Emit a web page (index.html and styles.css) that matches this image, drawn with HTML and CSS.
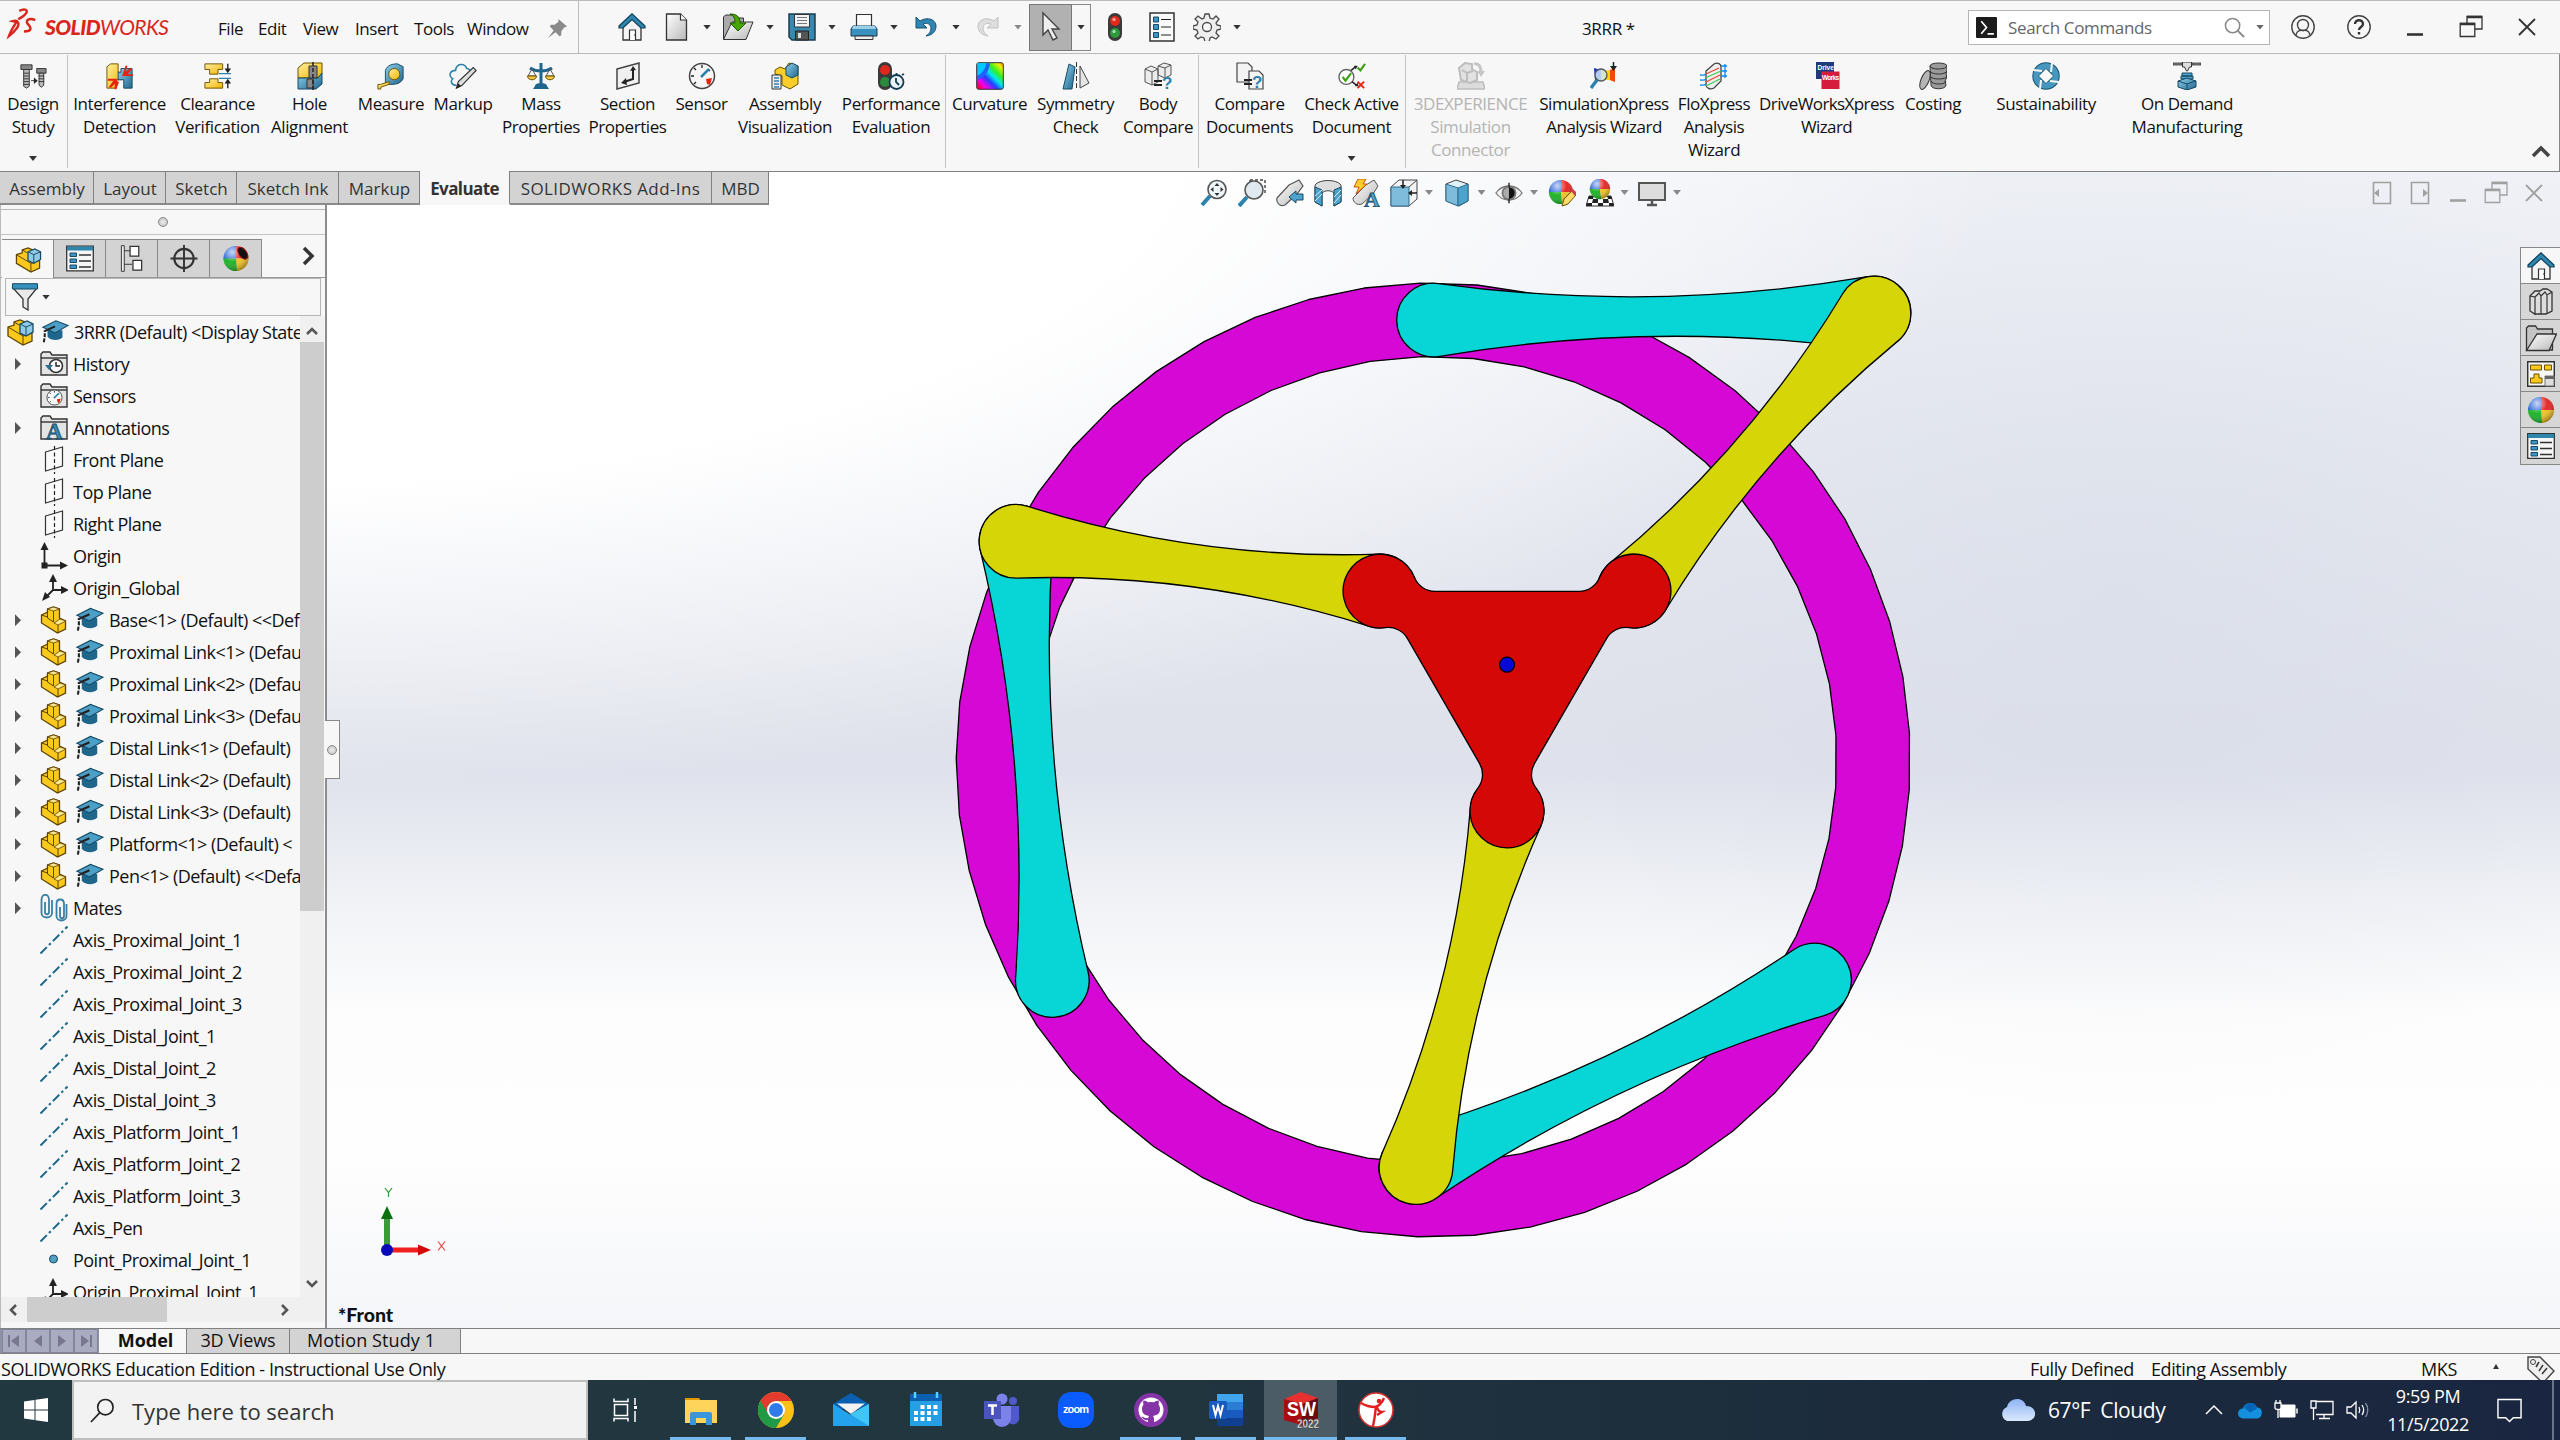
FILE: index.html
```html
<!DOCTYPE html>
<html lang="en">
<head>
<meta charset="utf-8">
<title>3RRR * - SOLIDWORKS</title>
<link rel="stylesheet" href="styles.css">
</head>
<body>
<svg class="defs" width="0" height="0">
  <defs>
    <linearGradient id="gBlue" x1="0" y1="0" x2="1" y2="1"><stop offset="0" stop-color="#8fd0ec"/><stop offset="1" stop-color="#1f668c"/></linearGradient>
    <linearGradient id="gGrey" x1="0" y1="0" x2="1" y2="1"><stop offset="0" stop-color="#fff"/><stop offset="1" stop-color="#b9b9b9"/></linearGradient>
    <linearGradient id="gYel" x1="0" y1="0" x2="1" y2="1"><stop offset="0" stop-color="#fff0a0"/><stop offset="1" stop-color="#f0b400"/></linearGradient>
    <linearGradient id="gRain" x1="1" y1="0" x2="0" y2="1"><stop offset="0" stop-color="#ff5a00"/><stop offset=".12" stop-color="#f0f000"/><stop offset=".3" stop-color="#30f020"/><stop offset=".45" stop-color="#00e8f0"/><stop offset=".6" stop-color="#2040ff"/><stop offset=".78" stop-color="#f000f0"/><stop offset="1" stop-color="#ff0000"/></linearGradient>
    <radialGradient id="gShine" cx=".35" cy=".25" r=".8"><stop offset="0" stop-color="#fff" stop-opacity=".75"/><stop offset=".5" stop-color="#fff" stop-opacity=".05"/><stop offset="1" stop-color="#000" stop-opacity=".4"/></radialGradient>
    <linearGradient id="gCloud" x1="0" y1="0" x2="0" y2="1"><stop offset="0" stop-color="#8db4f4"/><stop offset="1" stop-color="#dbe8fd"/></linearGradient>
  </defs>
  <symbol id="i-house" viewBox="0 0 28 28"><path d="M5 12v15h18V12L14 4z" fill="#f4f4f4" stroke="#333" stroke-width="1.3"/><path d="M11.500 27V17h6v10" fill="#fff" stroke="#333" stroke-width="1.200"/><path d="M16 22h1" stroke="#333"/><path d="M1 13L14 .8 27 13v2h-4l-9-8.500L5 15H1z" fill="#2f86ad" stroke="#0f3f5c" stroke-width="1.200"/></symbol>
  <symbol id="i-new" viewBox="0 0 28 28"><path d="M3.500 1h14l6 6v20h-20z" fill="url(#gGrey)" stroke="#333" stroke-width="1.300"/><path d="M17.500 1v6h6" fill="#fff" stroke="#333" stroke-width="1.200"/></symbol>
  <symbol id="i-openarrow" viewBox="0 0 32 28"><path d="M1.500 26V4l2-2h7l2 3h9v21z" fill="#aaa" stroke="#333"/><path d="M1.500 26.500L10 9h21l-7 17.500z" fill="url(#gGrey)" stroke="#333"/><path d="M8 1c6 0 10 2 10 9h6l-8 8-8-8h5c0-5-1-7-5-9z" fill="#48a500" stroke="#1e5c00"/></symbol>
  <symbol id="i-folder" viewBox="0 0 32 28"><path d="M1.500 26V4l2-2h7l2 3h15v21z" fill="#c4c4c4" stroke="#333" stroke-width="1.300"/><path d="M1.500 26.500L12 10h19.500L24 26.500z" fill="url(#gGrey)" stroke="#333" stroke-width="1.300"/></symbol>
  <symbol id="i-save" viewBox="0 0 28 28"><path d="M1 1h26v26H4l-3-3z" fill="#3788b0" stroke="#1b3c50" stroke-width="1.500"/><path d="M6.500 1.500h15V14h-15z" fill="#f2f2f2" stroke="#333"/><path d="M9 4.500h10M9 7.500h10M9 10.500h10" stroke="#777"/><path d="M7.500 18h13v9h-13z" fill="#555" stroke="#222"/><path d="M10 20h3v5h-3z" fill="#ddd"/></symbol>
  <symbol id="i-print" viewBox="0 0 28 28"><path d="M6.500 14V1.500h15V14" fill="#fafafa" stroke="#333" stroke-width="1.200"/><path d="M3 13h22l2 3v7H1v-7z" fill="#3a91bd" stroke="#143d54"/><path d="M3 13h22l1 3H2z" fill="#9bd0e8"/><path d="M5 23h18v3.500H5z" fill="#eee" stroke="#333"/></symbol>
  <symbol id="i-undo" viewBox="0 0 24 24"><path d="M2 2v11h11L9 9c5-2 8 1 8 4 0 4-2 6-5 8 7-1 10-5 10-10 0-6-8-10-16-5z" fill="#2f86b5" stroke="#17506f"/></symbol>
  <symbol id="i-redo" viewBox="0 0 24 24"><path d="M22 2v11H11l4-4c-5-2-8 1-8 4 0 4 2 6 5 8C5 20 2 16 2 11 2 5 10 1 18 6z" fill="#dedede" stroke="#c2c2c2"/></symbol>
  <symbol id="i-cursor" viewBox="0 0 24 32"><path d="M4 2v22l5-5 5 10 4-2-5-9h7z" fill="#eee" stroke="#444" stroke-width="1.400"/></symbol>
  <symbol id="i-traffic" viewBox="0 0 16 30"><rect x="1" y="1" width="14" height="28" rx="7" fill="#3a3a3a"/><circle cx="8" cy="9" r="5" fill="#e0281c"/><circle cx="8" cy="21" r="5" fill="#2d9a3c"/><circle cx="7" cy="7.500" r="1.700" fill="#ff9b90"/><circle cx="7" cy="19.500" r="1.700" fill="#9bdca2"/></symbol>
  <symbol id="i-list" viewBox="0 0 26 30"><path d="M1 1h24v28H1z" fill="#fafafa" stroke="#333" stroke-width="1.500"/><path d="M4.500 5h5v5h-5zM4.500 12.500h5v5h-5zM4.500 20.500h5v5h-5z" fill="#3c95c4" stroke="#174a66"/><path d="M12 7.500h10M12 15h10M12 23h10" stroke="#222" stroke-width="1.200"/></symbol>
  <symbol id="i-gear" viewBox="0 0 28 28"><path d="M12 1h4l1 4 3 1 3-3 3 3-3 4 1 2 4 1v3l-4 1-1 3 3 3-3 3-4-2-2 1-1 4h-4l-1-4-3-1-3 2-3-3 3-3-1-3-4-1v-3l4-1 1-3-3-3 3-3 4 3 2-1z" fill="#eee" stroke="#4a4a4a" stroke-width="1.300"/><circle cx="14" cy="14" r="4.500" fill="#f7f7f7" stroke="#4a4a4a" stroke-width="1.300"/></symbol>
  <symbol id="i-pin" viewBox="0 0 22 22"><path d="M12 1l9 8-3 1-3 4 0 4-2 1-4-4-8 6 6-8-4-4 1-2h4l4-3z" fill="#8a8a8a"/></symbol>
  <symbol id="i-bolts" viewBox="0 0 30 28"><path d="M2 2h12v5H2z" fill="#888" stroke="#333"/><path d="M5 7h6v18l-3 2-3-2z" fill="#bbb" stroke="#333"/><path d="M5 11h6M5 14h6M5 17h6M5 20h6M5 23h6" stroke="#333"/><path d="M19 6h10v5H19z" fill="#888" stroke="#333"/><path d="M21.500 11h5v13l-2.500 2-2.500-2z" fill="#bbb" stroke="#333"/><path d="M21 14h6M21 17h6M21 20h6M13 19h6" stroke="#333"/><path d="M16 15.500l4 3.500-4 3.500z" fill="#222"/></symbol>
  <symbol id="i-interf" viewBox="0 0 30 28"><path d="M1 4l4-3h8v9h4v8h-6v9H1z" fill="url(#gYel)" stroke="#6b5200"/><path d="M16 6h12v21h-9v-9h-6v-8h3z" fill="url(#gBlue)" stroke="#174a66"/><path d="M22 3l-3 9 8-6-6 7h8M2 18h8l-6 8 7-6-1 8 3-8" fill="none" stroke="#e8220c" stroke-width="2"/></symbol>
  <symbol id="i-clear" viewBox="0 0 30 28"><path d="M1 1h19v6h-5v5H6V7H1z" fill="url(#gYel)" stroke="#6b5200"/><path d="M6 17h9v4h5v6H1v-6h5z" fill="url(#gYel)" stroke="#6b5200"/><path d="M16 11.500h13M16 16.500h13" stroke="#2b83ad" stroke-width="1.500"/><path d="M25.500 1v8M25.500 27v-8" stroke="#222" stroke-width="1.500"/><path d="M22 6h7l-3.500 5zM22 22h7l-3.500-5z" fill="#222"/></symbol>
  <symbol id="i-hole" viewBox="0 0 28 28"><path d="M2 6l6-5h18v10l-4 5H2z" fill="url(#gYel)" stroke="#6b5200"/><path d="M2 16h20l4-5v11l-6 5H2z" fill="url(#gBlue)" stroke="#174a66"/><path d="M13 4h8v12h-8zM11 17h6v9h-6z" fill="#888" stroke="#333"/><path d="M17 0v28" stroke="#222" stroke-width="1.500" stroke-dasharray="4 2"/></symbol>
  <symbol id="i-tape" viewBox="0 0 30 28"><path d="M9 8c2-6 8-7 13-7l6 3v13c-2 4-6 6-12 6H9z" fill="url(#gBlue)" stroke="#174a66"/><circle cx="18.500" cy="12" r="6" fill="url(#gYel)" stroke="#6b5200"/><path d="M1 23h3l9-3v3L4 26v2H1z" fill="url(#gYel)" stroke="#6b5200"/></symbol>
  <symbol id="i-markup" viewBox="0 0 30 28"><path d="M8 24c-5 0-7-4-4-7-5-3-3-9 3-9 1-8 10-8 12-2 2 0 3 1 4 3" fill="none" stroke="#2b83ad" stroke-width="1.700"/><path d="M8 27l2-7L26 5l3 3-15 16z" fill="#ddd" stroke="#333" stroke-width="1.300"/><path d="M8 27l2-5 3 3z" fill="#222"/></symbol>
  <symbol id="i-mass" viewBox="0 0 28 28"><path d="M14 1v20M3 6c6 4 16 4 22 0" fill="none" stroke="#1f668c" stroke-width="3"/><path d="M8 24c0-4 12-4 12 0l2 3H6z" fill="#1f668c"/><path d="M5 7l-4 7h8zM23 7l-4 7h8z" fill="none" stroke="#555"/><path d="M.5 14h9c0 5-9 5-9 0zM18.500 14h9c0 5-9 5-9 0z" fill="#f2c744" stroke="#6b5200"/></symbol>
  <symbol id="i-section" viewBox="0 0 28 28"><path d="M3 7l22-6v20L3 27z" fill="#f0f0f0" stroke="#444" stroke-width="1.500"/><path d="M19 8v9l-9 3" fill="none" stroke="#222" stroke-width="2"/><path d="M16 9l3-5 3 4zM12 16l-5 5 6 2z" fill="#222"/></symbol>
  <symbol id="i-gauge" viewBox="0 0 28 28"><circle cx="14" cy="14" r="12.500" fill="#f6f6f6" stroke="#444" stroke-width="1.500"/><path d="M14 3v3M6 6l2 2M3 14h3M6 22l2-2M22 8l-1 1" stroke="#222" stroke-width="1.300"/><path d="M13 15l8-8" stroke="#2b83ad" stroke-width="2.500"/><path d="M18 17l6-1-2 7-3-1z" fill="#e8220c"/></symbol>
  <symbol id="i-asmvis" viewBox="0 0 28 28"><path d="M4 8l5-3 5 2 4-6 9 3v18l-8 5-8-4V14l-7-2z" fill="#fbcf2a" stroke="#6b5200"/><path d="M15 5l6-4 6 3v9l-6 3-6-3z" fill="url(#gBlue)" stroke="#174a66"/><path d="M1 13h9v14H1z" fill="#eee" stroke="#333"/><path d="M3 16h5M3 19h5M3 22h5M3 25h5" stroke="#2b83ad" stroke-width="1.500"/></symbol>
  <symbol id="i-perf" viewBox="0 0 28 28"><rect x="1" y="0" width="14" height="28" rx="7" fill="#3a3a3a"/><circle cx="8" cy="8" r="5" fill="#e0281c"/><circle cx="8" cy="20" r="5" fill="#2d8a3c"/><circle cx="19.500" cy="20" r="7" fill="#e9f3f8" stroke="#143d54" stroke-width="1.800"/><path d="M19.500 11v3M19 16v4l3 3M25 13l2-1" stroke="#143d54" stroke-width="1.800" fill="none"/></symbol>
  <symbol id="i-curv" viewBox="0 0 28 28"><rect x=".7" y=".7" width="26.600" height="26.600" rx="2" fill="url(#gRain)" stroke="#333"/><path d="M1.300 1.300h9C9 8 6 12 1.300 14z" fill="#00c8ff"/><path d="M1.300 14C6 12 9 8 10.300 1.300H14C13 10 8 16 1.300 18z" fill="#2060ff"/></symbol>
  <symbol id="i-sym" viewBox="0 0 28 28"><path d="M7 2l-6 25h9l3-22z" fill="url(#gBlue)" stroke="#174a66"/><path d="M18 4v22l9-5z" fill="#e5e5e5" stroke="#444"/><path d="M14.500 0v28" stroke="#333" stroke-dasharray="5 2"/></symbol>
  <symbol id="i-body" viewBox="0 0 28 28"><path d="M1 7l6-3 7 3v13l-6 3-7-3zM14 4l6-3 7 2v10l-6 3-7-3z" fill="#ececec" stroke="#555"/><path d="M1 7l7 3 6-3M8 10v13M14 4l7 2 6-3M21 6v9" fill="none" stroke="#555"/><path d="M10 19h8M10 23h8" stroke="#222" stroke-width="2"/><text class="qm" x="18" y="27">?</text></symbol>
  <symbol id="i-docs" viewBox="0 0 28 28"><path d="M1 1h11l4 4v15H1z" fill="#f3f3f3" stroke="#444" stroke-width="1.200"/><path d="M13 9h10l4 4v14H13z" fill="#f3f3f3" stroke="#444" stroke-width="1.200"/><path d="M8 18h8M8 22h8" stroke="#222" stroke-width="2"/><text class="qm" x="16" y="26">?</text></symbol>
  <symbol id="i-check" viewBox="0 0 30 28"><circle cx="9" cy="15" r="8" fill="#fff" stroke="#666" stroke-width="1.500"/><path d="M5 15l3 4 6-8M21 5l3 3 5-7" fill="none" stroke="#3a9d0c" stroke-width="2.200"/><path d="M14 8l5-4M15 20l5 4" stroke="#222" stroke-width="1.500"/><path d="M17 3l4 0-2 4zM18 25l4 0-1-4z" fill="#222"/><path d="M21 20l7 7M28 20l-7 7" stroke="#e8220c" stroke-width="2"/></symbol>
  <symbol id="i-3dx" viewBox="0 0 28 28"><path d="M2 20h24l2 7H0z" fill="#dcdcdc" stroke="#bdbdbd" stroke-width="1.500"/><path d="M2 6l6-5 7 1v5l5 3v8l-7 3-9-3z" fill="#e2e2e2" stroke="#bdbdbd" stroke-width="2"/><path d="M5 8l5 3 6-2M10 11v8" fill="none" stroke="#bdbdbd" stroke-width="2"/><path d="M17 2c5-1 7 3 7 8" fill="none" stroke="#c6c6c6" stroke-width="3"/><path d="M20 9h8l-4 6z" fill="#c6c6c6"/></symbol>
  <symbol id="i-simx" viewBox="0 0 28 28"><path d="M4 6c5 4 12 4 21 0v14c-6-3-12-3-19 0z" fill="#ffd800"/><path d="M4 6l7 2v10l-6 1z" fill="#1535e0"/><path d="M20 8l5-2v14l-5-2z" fill="#f04810"/><circle cx="11" cy="13" r="6" fill="#cfe6f3" fill-opacity=".85" stroke="#555" stroke-width="1.300"/><path d="M7 18l-6 8" stroke="#2b83ad" stroke-width="3.500"/><path d="M23.500 0v6" stroke="#222" stroke-width="1.500"/><path d="M20 4h7l-3.500 5z" fill="#222"/></symbol>
  <symbol id="i-flox" viewBox="0 0 28 28"><path d="M6 9l8-7c4-2 7 0 7 3v14l-7 7c-4 2-8 0-8-3z" fill="#eee" stroke="#444" stroke-width="1.300"/><path d="M6 12l13-6M6 20l14-7" stroke="#f04830" stroke-width="1.300"/><path d="M5 16l16-7M6 24l14-7" stroke="#43c95a" stroke-width="1.300"/><path d="M0 13c3 0 4 1 6-1M0 18c3 0 4 1 6-1M0 23c3 0 4 1 6-1M21 4h6M21 9h6M21 14h6M25 2v14" stroke="#0a8af0" stroke-width="1.300" fill="none"/></symbol>
  <symbol id="i-drive" viewBox="0 0 28 28"><path d="M3 0h18v17H3z" fill="#1f3a7a"/><path d="M8.500 9.500h18V27h-18z" fill="#d41c3c"/><text class="dw" x="4.500" y="7.500">Drive</text><text class="dw" x="9" y="17.500" textLength="17">Works</text></symbol>
  <symbol id="i-coins" viewBox="0 0 28 28"><path d="M11 4c0-4 17-4 17 0v5l-1 3 1 3-2 4 1 4c0 5-15 5-15 0z" fill="#9a9a9a" stroke="#333"/><path d="M11 4c0 4 17 4 17 0M11 9c1 4 16 4 17 0M11 14c1 4 17 4 17 0M12 19c1 4 15 4 15 0" fill="none" stroke="#333"/><ellipse cx="6" cy="18" rx="4" ry="10" transform="rotate(22 6 18)" fill="#b5b5b5" stroke="#333"/></symbol>
  <symbol id="i-sust" viewBox="0 0 28 28"><circle cx="14" cy="14" r="9.500" fill="none" stroke="#15506f" stroke-width="8.500"/><circle cx="14" cy="14" r="9.500" fill="none" stroke="#4597bf" stroke-width="6.500"/><path d="M1 8l9 1M20 1l-1 9M27 20l-9-1M8 27l1-9" stroke="#f7f7f7" stroke-width="2"/><path d="M14 6.500l7.500 7.500-7.500 7.500L6.500 14z" fill="#f7f7f7" stroke="#15506f" stroke-width=".8"/></symbol>
  <symbol id="i-ondem" viewBox="0 0 28 28"><path d="M0 1h9v2H0zM19 1h9v2h-9z" fill="#888" stroke="#333" stroke-width=".8"/><path d="M9.500 0h9v5h-2l-2 4h-1l-2-4h-2z" fill="#ddd" stroke="#333"/><path d="M9 11h10v3H9zM8 14h12v3H8z" fill="#4da3cc" stroke="#174a66"/><path d="M5 19l9-3 9 3v6l-9 3-9-3z" fill="url(#gBlue)" stroke="#174a66"/><path d="M5 19l9 3 9-3M14 22v6" fill="none" stroke="#174a66"/></symbol>
  <symbol id="i-zoomfit" viewBox="0 0 28 28"><path d="M10 17l-8 9" stroke="#2b83ad" stroke-width="4"/><circle cx="17" cy="10.500" r="9" fill="#eef6fa" stroke="#555" stroke-width="1.600"/><path d="M17 4l-2.500 3h5zM17 17l-2.500-3h5zM10.500 10.500l3-2.500v5zM23.500 10.500l-3-2.500v5z" fill="#333"/></symbol>
  <symbol id="i-zoomarea" viewBox="0 0 28 28"><path d="M12 1h15v15M12 1v4" fill="none" stroke="#444" stroke-width="1.400" stroke-dasharray="3 2"/><path d="M9 18l-8 9" stroke="#2b83ad" stroke-width="4"/><circle cx="16" cy="11" r="9" fill="#dfe9ef" stroke="#555" stroke-width="1.600"/></symbol>
  <symbol id="i-prev" viewBox="0 0 28 28"><path d="M1 19L13 6l6-3 4-2 4 6-6 8-12 11c-5 2-9-2-8-7z" fill="url(#gGrey)" stroke="#555" stroke-width="1.200"/><path d="M13 18l7-6v3h7v6h-7v3z" fill="#4da3cc" stroke="#174a66"/></symbol>
  <symbol id="i-secview" viewBox="0 0 28 28"><path d="M1 6c4-6 22-6 26 0v17l-7 4V14c-3-3-9-3-12 0v13l-7-4z" fill="#ddd" stroke="#444"/><path d="M1 8l7 3v16l-7-4zM27 8l-7 3v16l7-4z" fill="#4da3cc" stroke="#174a66"/><path d="M1 17l7-6M1 22l7-7M20 18l7-7M20 24l7-8" stroke="#d8eef8"/></symbol>
  <symbol id="i-annot" viewBox="0 0 28 28"><path d="M1 19L14 6l8-5 4 6-5 8-11 10c-5 2-9-2-9-6z" fill="url(#gGrey)" stroke="#555"/><path d="M6 0h8l-3 5h4L4 15l3-7H2z" fill="#fbcf2a" stroke="#c8500a"/><text class="bigA" x="12" y="28">A</text></symbol>
  <symbol id="i-orient" viewBox="0 0 28 28"><path d="M1 8L9 1h18v19l-8 7H1z" fill="#f4f4f4" stroke="#444"/><path d="M1 8h18v19H1z" fill="#7fbcdb" stroke="#2b6e91"/><path d="M19 8l8-7" stroke="#444"/><path d="M13 1v7M27 14h-7" stroke="#222" stroke-width="1.500"/><path d="M10 6h6l-3 4zM22 11v6l-4-3z" fill="#222"/></symbol>
  <symbol id="i-cube" viewBox="0 0 28 28"><path d="M3 5l10-4 12 4v17l-9 5-13-5z" fill="#e2f0f8" stroke="#444"/><path d="M3 5l12 4v18L3 22z" fill="#7fbcdb" stroke="#2b6e91"/><path d="M15 9l10-4v17l-10 5z" fill="#4da3cc" stroke="#2b6e91"/></symbol>
  <symbol id="i-eye" viewBox="0 0 30 28"><path d="M1 14C8 4 22 4 29 14 22 24 8 24 1 14z" fill="#f2f2f2" stroke="#777" stroke-width="1.400"/><circle cx="15" cy="14" r="8" fill="#777"/><path d="M15 3v22" stroke="#222" stroke-width="1.500"/><path d="M15 8a6 6 0 0 1 0 12z" fill="#111"/><path d="M15 8a6 6 0 0 0 0 12z" fill="#aaa"/></symbol>
  <symbol id="i-ball" viewBox="0 0 28 28"><path d="M14 14V1A13 13 0 0 0 1 15z" fill="#2a64d8"/><path d="M14 14V1a13 13 0 0 1 13 13z" fill="#e02020"/><path d="M14 14h13a13 13 0 0 1-12 13z" fill="#f0c020"/><path d="M14 14H1a13 13 0 0 0 14 13z" fill="#16b020"/><circle cx="14" cy="14" r="13" fill="url(#gShine)"/></symbol>
  <symbol id="i-ballhole" viewBox="0 0 28 28"><use href="#i-ball"/><ellipse cx="21" cy="8.500" rx="4" ry="7" transform="rotate(-35 21 8.500)" fill="#111" stroke="#a01010"/></symbol>
  <symbol id="i-ballpen" viewBox="0 0 28 28"><use href="#i-ball" width="26" height="26"/><path d="M14 27l2-7 8-8 4 4-8 9z" fill="#fbdc6a" stroke="#6b5200"/><path d="M23 12l2-2 4 4-2 3z" fill="#d04040"/></symbol>
  <symbol id="i-scene" viewBox="0 0 28 28"><path d="M3 17h22l3 10H0z" fill="#fff" stroke="#333"/><path d="M3 17h5l-1 3H2zM12 17h5v3h-5zM21 17h4l1 3h-4zM7 20h5v4H6zM17 20h5l1 4h-6zM0 27l1-3h5v3zM12 24h5v3h-5zM23 24h4l1 3h-5z" fill="#222"/><use href="#i-ball" x="3" y="-1" width="22" height="22"/></symbol>
  <symbol id="i-monitor" viewBox="0 0 28 28"><path d="M1 4h26v17H1z" fill="#ddd" stroke="#555" stroke-width="2"/><path d="M14 21v4M9 26h10" stroke="#555" stroke-width="2.500"/></symbol>
  <symbol id="i-asm" viewBox="0 0 28 28"><path d="M2 9l6-2V4l6-2 5 2v8l7 3v8l-9 4L2 18z" fill="#fbc91e" stroke="#5c4300" stroke-width="1.300"/><path d="M2 9l15 9v9M8 4l5 3M17 18l9-3" fill="none" stroke="#5c4300"/><path d="M14 6l7-3 6 3v8l-7 4-6-3z" fill="#8fcbe6" stroke="#174a66" stroke-width="1.300"/><path d="M14 6l6 3 7-3M20 9v9" fill="none" stroke="#174a66"/></symbol>
  <symbol id="i-part" viewBox="0 0 28 28"><path d="M1.500 9l6-3V3l6-2 6 2v9l6 3v8l-8 4L1.500 17z" fill="#fbc91e" stroke="#5c4300" stroke-width="1.300"/><path d="M7.500 3l6 2 6-2-6-2zM14 17l6-4 6 2-8 4z" fill="#fbe98a" stroke="#5c4300" stroke-width=".8"/><path d="M1.500 9l6 2M7.500 6v6l6 4V5M18 19v8" fill="none" stroke="#5c4300"/></symbol>
  <symbol id="i-cap" viewBox="0 0 30 28"><path d="M7 12v7c3 4 12 5 16 1v-8z" fill="#1f668c"/><path d="M2 9l14-7 13 5-14 8z" fill="#4c9fc6" stroke="#174a66" stroke-width="1.200"/><path d="M15 8L4 13v6l-1 6" fill="none" stroke="#222" stroke-width="2.200" stroke-dasharray="13 1.500 4 1.500"/></symbol>
  <symbol id="i-fold" viewBox="0 0 28 28"><path d="M1 25V4l2-2h7l2 3h15v20z" fill="#e4e4e4" stroke="#333" stroke-width="1.400"/><path d="M1 8h26" stroke="#333" stroke-width="1.400"/></symbol>
  <symbol id="i-hist" viewBox="0 0 28 28"><use href="#i-fold"/><circle cx="16" cy="16" r="6.500" fill="#fff" stroke="#333" stroke-width="1.600"/><path d="M16 12v4h4" fill="none" stroke="#222" stroke-width="1.400"/><path d="M5 15h8l-4 5z" fill="#2b6e91"/></symbol>
  <symbol id="i-sens" viewBox="0 0 28 28"><use href="#i-fold"/><use href="#i-gauge" x="6" y="7" width="17" height="17"/></symbol>
  <symbol id="i-anno" viewBox="0 0 28 28"><use href="#i-fold"/><text class="anA" x="6" y="25">A</text></symbol>
  <symbol id="i-plane" viewBox="0 0 28 28"><path d="M5.500 6L22.500 1v19l-17 5z" fill="#fafafa" stroke="#333" stroke-width="1.200"/><path d="M14.500 0v28" stroke="#222" stroke-width="1.200" stroke-dasharray="4 2.500"/></symbol>
  <symbol id="i-origin" viewBox="0 0 28 28"><path d="M4.500 24V5M4.500 23.500H22" stroke="#222" stroke-width="1.800"/><path d="M4.500 0l4 8h-8zM28 23.500l-8 4v-8zM1.500 20.500h6v6h-6z" fill="#222"/></symbol>
  <symbol id="i-csys" viewBox="0 0 28 28"><path d="M13 16V5M13 16h9M13 16l-7 7" stroke="#222" stroke-width="1.800"/><path d="M13 0l4 8H9zM29 16l-8 4v-8zM2 27l3-9 5 5z" fill="#222"/></symbol>
  <symbol id="i-mates" viewBox="0 0 28 28"><path d="M5 8v10c0 3 4 3 4 0V6c0-7-7.500-7-7.500 0v13c0 6 10.500 6 10.500 0V6M20 13v9c0 3 4 3 4 0V10c0-6-7.500-6-7.500 0v12c0 6 10 6 10 0V10" fill="none" stroke="#3a7fa3" stroke-width="1.800"/></symbol>
  <symbol id="i-axis" viewBox="0 0 28 28"><path d="M.5 27.500L27.500.5" stroke="#1f668c" stroke-width="2" stroke-dasharray="9 3 2.500 3"/></symbol>
  <symbol id="i-point" viewBox="0 0 28 28"><circle cx="13.500" cy="13" r="4" fill="#4d9fc4" stroke="#174a66"/></symbol>
  <symbol id="i-prop" viewBox="0 0 28 26"><path d="M.7.700h26.600v24.600H.7z" fill="#f6f6f6" stroke="#333" stroke-width="1.300"/><path d="M1 1h26v4H1z" fill="#2f86ad"/><path d="M4 7.500h6.500v3.500H4zM4 13.500h6.500v3.500H4zM4 19.500h6.500v3.500H4z" fill="#3c95c4" stroke="#174a66"/><path d="M13 9.500h12M13 15.500h12M13 21.500h12" stroke="#333" stroke-width="1.300"/></symbol>
  <symbol id="i-config" viewBox="0 0 24 28"><path d="M1 .7h3v26.600H1zM4 6h8M4 20h8" fill="#eee" stroke="#333"/><path d="M10 1.500h9v10h-9zM13 16h9v10h-9z" fill="#fff" stroke="#333" stroke-width="1.300"/></symbol>
  <symbol id="i-target" viewBox="0 0 28 28"><circle cx="14" cy="14" r="10" fill="none" stroke="#333" stroke-width="2.200"/><path d="M14 0v28M0 14h28" stroke="#333" stroke-width="2"/></symbol>
  <symbol id="i-filter" viewBox="0 0 28 28"><path d="M2 5h24L17 16v11l-5-3v-8z" fill="#e9e9e9" stroke="#333" stroke-width="1.300"/><path d="M1.500.700h25V6h-25z" fill="#3790bb" stroke="#174a66"/></symbol>
  <symbol id="i-books" viewBox="0 0 28 28"><path d="M3 8l5-5h5l3-2h4l5 3v19l-6 3H8l-5-3z" fill="#ddd" stroke="#333" stroke-width="1.300"/><path d="M8 9v18M14 8v18M20 7v18M3 8l5 1 4-4 2 3 4-4 2 3 5-3" fill="none" stroke="#333" stroke-width="1.200"/></symbol>
  <symbol id="i-views" viewBox="0 0 28 26"><path d="M.7.700h26.600v24.600H.7z" fill="#f6f6f6" stroke="#333" stroke-width="1.500"/><path d="M3.500 4h11v5h-11zM17.500 4h7v5h-7zM7 13h5v4h3v5H3.500v-5H7z" fill="#fbc91e" stroke="#6b5200"/><path d="M18 15h9v10h-9z" fill="#ddd" stroke="#777"/><path d="M18 15h9v3h-9z" fill="#666"/></symbol>
  <symbol id="i-min" viewBox="0 0 24 24"><path d="M4 19.500h16" stroke="currentColor" stroke-width="2.600"/></symbol>
  <symbol id="i-rest" viewBox="0 0 24 24"><path d="M8 8V1.500h15V14h-7" fill="none" stroke="currentColor" stroke-width="1.300"/><path d="M8 2h15M1 9h15" stroke="currentColor" stroke-width="2.400"/><path d="M1.200 8.500h14.600v13H1.200z" fill="none" stroke="currentColor" stroke-width="1.300"/></symbol>
  <symbol id="i-x" viewBox="0 0 24 24"><path d="M4 4l16 16M20 4L4 20" stroke="currentColor" stroke-width="1.800"/></symbol>
</svg>

<header class="titlebar">
  <div class="brand">
    <svg class="ds" viewBox="0 0 32 32"><path d="M12 3c6-3 10-1 7 3-2 3-5 4-8 6M1 30c2-6 6-12 8-15l-4-1c6-2 8 3 4 8-2 3-4 5-8 8zM29 13c-6-3-11 0-8 4 4 4 5 8-4 8" fill="none" stroke="#d9261c" stroke-width="2.600"/></svg>
    <span class="brand-name"><b>SOLID</b>WORKS</span>
  </div>
  <nav class="menus"><span class="m1">File</span><span class="m2">Edit</span><span class="m3">View</span><span class="m4">Insert</span><span class="m5">Tools</span><span class="m6">Window</span><svg class="pin"><use href="#i-pin"/></svg></nav>
  <div class="quick">
    <svg class="c28"><use href="#i-house"/></svg>
    <svg class="c28 q-new"><use href="#i-new"/></svg><i class="dd"></i>
    <svg class="c32 q-g"><use href="#i-openarrow"/></svg><i class="dd"></i>
    <svg class="c28 q-g2"><use href="#i-save"/></svg><i class="dd"></i>
    <svg class="c28 q-g2"><use href="#i-print"/></svg><i class="dd"></i>
    <svg class="c24 q-g3"><use href="#i-undo"/></svg><i class="dd q-d"></i>
    <svg class="c24 q-g3"><use href="#i-redo"/></svg><i class="dd q-d light"></i>
    <span class="sel"><svg><use href="#i-cursor"/></svg></span><span class="sel-dd"><i class="dd"></i></span>
    <svg class="q-tr"><use href="#i-traffic"/></svg>
    <svg class="q-li"><use href="#i-list"/></svg>
    <svg class="q-ge"><use href="#i-gear"/></svg><i class="dd q-d2"></i>
  </div>
  <div class="doc-title">3RRR *</div>
  <div class="search"><span class="prompt"><svg viewBox="0 0 20 20"><path d="M5 4l5 6-5 6M11 16h6" fill="none" stroke="#fff" stroke-width="1.600"/></svg></span><span class="ph">Search Commands</span><svg class="mag" viewBox="0 0 22 22"><circle cx="9" cy="9" r="7.500" fill="none" stroke="#888" stroke-width="1.600"/><path d="M14 14l7 7" stroke="#888" stroke-width="2"/></svg><i class="dd"></i></div>
  <div class="win-btns">
    <svg viewBox="0 0 24 24"><g fill="none" stroke="#444" stroke-width="1.400"><circle cx="12" cy="12" r="11.200"/><circle cx="12" cy="10" r="5.500"/><path d="M5 20c1-5 4-5 7-4.500 3-.5 6-.5 7 4.500"/></g></svg>
    <svg viewBox="0 0 24 24"><circle cx="12" cy="12" r="11.200" fill="none" stroke="#444" stroke-width="1.400"/><path d="M8 9c0-5 8-5 8 0 0 3-4 3-4 6M12 17v2.500" fill="none" stroke="#333" stroke-width="2.400"/></svg>
    <svg><use href="#i-min"/></svg><svg><use href="#i-rest"/></svg><svg><use href="#i-x"/></svg>
  </div>
</header>

<section class="ribbon">
  <div class="cmd w66"><svg><use href="#i-bolts"/></svg><span>Design<br>Study</span><i class="dd"></i></div><hr>
  <div class="cmd w102"><svg><use href="#i-interf"/></svg><span>Interference<br>Detection</span></div>
  <div class="cmd w95"><svg><use href="#i-clear"/></svg><span>Clearance<br>Verification</span></div>
  <div class="cmd w89"><svg><use href="#i-hole"/></svg><span>Hole<br>Alignment</span></div>
  <div class="cmd w74"><svg><use href="#i-tape"/></svg><span>Measure</span></div>
  <div class="cmd w70"><svg><use href="#i-markup"/></svg><span>Markup</span></div>
  <div class="cmd w86"><svg><use href="#i-mass"/></svg><span>Mass<br>Properties</span></div>
  <div class="cmd w87"><svg><use href="#i-section"/></svg><span>Section<br>Properties</span></div>
  <div class="cmd w61"><svg><use href="#i-gauge"/></svg><span>Sensor</span></div>
  <div class="cmd w106"><svg><use href="#i-asmvis"/></svg><span>Assembly<br>Visualization</span></div>
  <div class="cmd w106"><svg><use href="#i-perf"/></svg><span>Performance<br>Evaluation</span></div><hr>
  <div class="cmd w85"><svg><use href="#i-curv"/></svg><span>Curvature</span></div>
  <div class="cmd w87"><svg><use href="#i-sym"/></svg><span>Symmetry<br>Check</span></div>
  <div class="cmd w78"><svg><use href="#i-body"/></svg><span>Body<br>Compare</span></div><hr>
  <div class="cmd w98"><svg><use href="#i-docs"/></svg><span>Compare<br>Documents</span></div>
  <div class="cmd w105"><svg><use href="#i-check"/></svg><span>Check Active<br>Document</span><i class="dd"></i></div><hr>
  <div class="cmd w126 off"><svg><use href="#i-3dx"/></svg><span>3DEXPERIENCE<br>Simulation<br>Connector</span></div>
  <div class="cmd w140"><svg><use href="#i-simx"/></svg><span>SimulationXpress<br>Analysis Wizard</span></div>
  <div class="cmd w80"><svg><use href="#i-flox"/></svg><span>FloXpress<br>Analysis<br>Wizard</span></div>
  <div class="cmd w145"><svg><use href="#i-drive"/></svg><span>DriveWorksXpress<br>Wizard</span></div>
  <div class="cmd w68"><svg><use href="#i-coins"/></svg><span>Costing</span></div>
  <div class="cmd w158"><svg><use href="#i-sust"/></svg><span>Sustainability</span></div>
  <div class="cmd w124"><svg><use href="#i-ondem"/></svg><span>On Demand<br>Manufacturing</span></div>
  <svg class="collapse" viewBox="0 0 20 12"><path d="M2 10l8-8 8 8" fill="none" stroke="#444" stroke-width="3.500"/></svg>
</section>

<main class="work">
  <div class="work-top">
    <div class="tabs"><span class="t94">Assembly</span><span class="t72">Layout</span><span class="t71">Sketch</span><span class="t101">Sketch Ink</span><span class="t81">Markup</span><span class="t90 on">Evaluate</span><span class="t202">SOLIDWORKS Add-Ins</span><span class="t57">MBD</span></div>
    <div class="hud">
      <svg><use href="#i-zoomfit"/></svg><svg><use href="#i-zoomarea"/></svg><svg><use href="#i-prev"/></svg><svg><use href="#i-secview"/></svg><svg><use href="#i-annot"/></svg>
      <svg><use href="#i-orient"/></svg><i class="dd"></i><svg><use href="#i-cube"/></svg><i class="dd"></i><svg><use href="#i-eye"/></svg><i class="dd"></i><svg><use href="#i-ballpen"/></svg><svg><use href="#i-scene"/></svg><i class="dd"></i><svg><use href="#i-monitor"/></svg><i class="dd"></i>
    </div>
    <div class="doc-btns">
      <svg viewBox="0 0 24 24"><path d="M3.500 1.500h17v21h-17z" fill="none" stroke="currentColor" stroke-width="1.600"/><path d="M9 8v8l-5-4z" fill="currentColor"/></svg>
      <svg viewBox="0 0 24 24"><path d="M3.500 1.500h17v21h-17z" fill="none" stroke="currentColor" stroke-width="1.600"/><path d="M15 8v8l5-4z" fill="currentColor"/></svg>
      <svg><use href="#i-min"/></svg><svg><use href="#i-rest"/></svg><svg><use href="#i-x"/></svg>
    </div>
  </div>
  <div class="work-body">
    <aside class="panel">
      <div class="grip"><b class="knob"></b></div>
      <div class="ptabs"><span class="on"><svg><use href="#i-asm"/></svg></span><span><svg><use href="#i-prop"/></svg></span><span><svg><use href="#i-config"/></svg></span><span><svg><use href="#i-target"/></svg></span><span><svg><use href="#i-ballhole"/></svg></span><svg class="more" viewBox="0 0 12 20"><path d="M2 2l8 8-8 8" fill="none" stroke="#333" stroke-width="3.500"/></svg></div>
      <div class="filter"><svg><use href="#i-filter"/></svg><i class="dd"></i></div>
      <div class="tree-wrap">
        <ul class="tree">
          <li class="root"><svg class="lead"><use href="#i-asm"/></svg><svg><use href="#i-cap"/></svg>3RRR (Default) &lt;Display State-1&gt;</li>
          <li><i class="ex"></i><svg><use href="#i-hist"/></svg>History</li>
          <li><i></i><svg><use href="#i-sens"/></svg>Sensors</li>
          <li><i class="ex"></i><svg><use href="#i-anno"/></svg>Annotations</li>
          <li><i></i><svg><use href="#i-plane"/></svg>Front Plane</li>
          <li><i></i><svg><use href="#i-plane"/></svg>Top Plane</li>
          <li><i></i><svg><use href="#i-plane"/></svg>Right Plane</li>
          <li><i></i><svg><use href="#i-origin"/></svg>Origin</li>
          <li><i></i><svg><use href="#i-csys"/></svg>Origin_Global</li>
          <li><i class="ex"></i><svg class="lead"><use href="#i-part"/></svg><svg class="cap"><use href="#i-cap"/></svg>Base&lt;1&gt; (Default) &lt;&lt;Default&gt;</li>
          <li><i class="ex"></i><svg class="lead"><use href="#i-part"/></svg><svg class="cap"><use href="#i-cap"/></svg>Proximal Link&lt;1&gt; (Default)</li>
          <li><i class="ex"></i><svg class="lead"><use href="#i-part"/></svg><svg class="cap"><use href="#i-cap"/></svg>Proximal Link&lt;2&gt; (Default)</li>
          <li><i class="ex"></i><svg class="lead"><use href="#i-part"/></svg><svg class="cap"><use href="#i-cap"/></svg>Proximal Link&lt;3&gt; (Default)</li>
          <li><i class="ex"></i><svg class="lead"><use href="#i-part"/></svg><svg class="cap"><use href="#i-cap"/></svg>Distal Link&lt;1&gt; (Default)</li>
          <li><i class="ex"></i><svg class="lead"><use href="#i-part"/></svg><svg class="cap"><use href="#i-cap"/></svg>Distal Link&lt;2&gt; (Default)</li>
          <li><i class="ex"></i><svg class="lead"><use href="#i-part"/></svg><svg class="cap"><use href="#i-cap"/></svg>Distal Link&lt;3&gt; (Default)</li>
          <li><i class="ex"></i><svg class="lead"><use href="#i-part"/></svg><svg class="cap"><use href="#i-cap"/></svg>Platform&lt;1&gt; (Default) &lt;</li>
          <li><i class="ex"></i><svg class="lead"><use href="#i-part"/></svg><svg class="cap"><use href="#i-cap"/></svg>Pen&lt;1&gt; (Default) &lt;&lt;Default&gt;</li>
          <li><i class="ex"></i><svg><use href="#i-mates"/></svg>Mates</li>
          <li><i></i><svg><use href="#i-axis"/></svg>Axis_Proximal_Joint_1</li>
          <li><i></i><svg><use href="#i-axis"/></svg>Axis_Proximal_Joint_2</li>
          <li><i></i><svg><use href="#i-axis"/></svg>Axis_Proximal_Joint_3</li>
          <li><i></i><svg><use href="#i-axis"/></svg>Axis_Distal_Joint_1</li>
          <li><i></i><svg><use href="#i-axis"/></svg>Axis_Distal_Joint_2</li>
          <li><i></i><svg><use href="#i-axis"/></svg>Axis_Distal_Joint_3</li>
          <li><i></i><svg><use href="#i-axis"/></svg>Axis_Platform_Joint_1</li>
          <li><i></i><svg><use href="#i-axis"/></svg>Axis_Platform_Joint_2</li>
          <li><i></i><svg><use href="#i-axis"/></svg>Axis_Platform_Joint_3</li>
          <li><i></i><svg><use href="#i-axis"/></svg>Axis_Pen</li>
          <li><i></i><svg><use href="#i-point"/></svg>Point_Proximal_Joint_1</li>
          <li><i></i><svg><use href="#i-csys"/></svg>Origin_Proximal_Joint_1</li>
        </ul>
        <div class="vscroll"><svg viewBox="0 0 14 10"><path d="M2 8l5-5 5 5" fill="none" stroke="#555" stroke-width="2.600"/></svg><b></b><svg viewBox="0 0 14 10"><path d="M2 2l5 5 5-5" fill="none" stroke="#555" stroke-width="2.600"/></svg></div>
      </div>
      <div class="hscroll"><svg viewBox="0 0 10 14"><path d="M8 2L3 7l5 5" fill="none" stroke="#555" stroke-width="2.600"/></svg><b></b><svg viewBox="0 0 10 14"><path d="M2 2l5 5-5 5" fill="none" stroke="#555" stroke-width="2.600"/></svg></div>
    </aside>
    <div class="canvas">
      <svg class="scene" viewBox="327 205 2233 1123">
        <g stroke="#000" stroke-width="1.300" stroke-linejoin="round">
          <path id="ring" fill="#d508d5" fill-rule="evenodd"/>
          <g fill="#08d5d5">
            <path class="prox" transform="translate(1433.500 320) rotate(-0.910)"/>
            <path class="prox" transform="translate(1052.300 980.500) rotate(-94.720)"/>
            <path class="prox" transform="translate(1814.500 980) rotate(154.810)"/>
          </g>
          <g fill="#d5d508">
            <path class="dist" transform="translate(1874 313) rotate(130.800)"/>
            <path class="dist" transform="translate(1016 541.300) rotate(7.770)"/>
            <path class="dist" transform="translate(1416 1167.500) rotate(-75.660)"/>
          </g>
          <path fill="#d50808" d="M1414.400 577.200A22 22 0 0 0 1435 591.300H1579A22 22 0 0 0 1599.600 577.200A37 37 0 1 1 1628.750 627.700A22 22 0 0 0 1606.500 638.600L1534.500 763.400A22 22 0 0 0 1536.150 788.100A37 37 0 1 1 1477.850 788.100A22 22 0 0 0 1479.500 763.400L1407.500 638.600A22 22 0 0 0 1385.300 627.700A37 37 0 1 1 1414.400 577.200Z"/>
          <circle cx="1507" cy="664.700" r="7.500" fill="#0808d5"/>
        </g>
        <g>
          <path d="M384 1218h6v30h-6z" fill="#3c9a3c"/><path d="M387 1206l6 13h-12z" fill="#0a7010"/>
          <path d="M389 1247.500h30v5h-30z" fill="#f02020"/><path d="M431 1250l-13 5.500v-11z" fill="#d80808"/>
          <circle cx="387" cy="1250" r="6" fill="#0808b8"/>
          <path class="ax-y" d="M385 1188l3.500 4.500 3.500-4.500M388.500 1192.500v4.500" fill="none"/>
          <path class="ax-x" d="M438 1241.500l7 9M445 1241.500l-7 9" fill="none"/>
        </g>
      </svg>
      <span class="view-name">*Front</span>
      <span class="handle"><b class="knob"></b></span>
      <div class="pane"><span class="on"><svg><use href="#i-house"/></svg></span><span><svg><use href="#i-books"/></svg></span><span><svg class="wide"><use href="#i-folder"/></svg></span><span><svg><use href="#i-views"/></svg></span><span><svg><use href="#i-ball"/></svg></span><span><svg><use href="#i-prop"/></svg></span></div>
    </div>
  </div>
</main>

<div class="btabs">
  <div class="nav"><span><svg viewBox="0 0 16 16"><path d="M3 2v12" stroke="#77778f" stroke-width="2"/><path d="M13 2v12L5 8z"/></svg></span><span><svg viewBox="0 0 16 16"><path d="M12 2v12L4 8z"/></svg></span><span><svg viewBox="0 0 16 16"><path d="M4 2v12l8-6z"/></svg></span><span><svg viewBox="0 0 16 16"><path d="M13 2v12" stroke="#77778f" stroke-width="2"/><path d="M3 2v12l8-6z"/></svg></span></div>
  <span class="bt model">Model</span><span class="bt v3d">3D Views</span><span class="bt motion">Motion Study 1</span>
</div>
<footer class="status"><span class="ed">SOLIDWORKS Education Edition - Instructional Use Only</span><span class="fd">Fully Defined</span><span class="ea">Editing Assembly</span><span class="mks">MKS</span><i class="up"></i><svg viewBox="0 0 28 26"><path d="M1 1v12l15 14 11-12L13 1z" fill="#eee" stroke="#444" stroke-width="1.400"/><circle cx="6" cy="6" r="2.500" fill="none" stroke="#444"/><path d="M12 6l-3 5M16 9l-4 6M20 12l-5 6" stroke="#333" stroke-width="1.500"/></svg></footer>

<div class="taskbar">
  <div class="start"><svg viewBox="0 0 24 24"><path d="M0 3.500L10.500 2v9.500H0zM11.500 1.800L24 0v11.500H11.500zM0 12.500h10.500V22L0 20.500zM11.500 12.500H24V24l-12.500-1.800z" fill="#fff"/></svg></div>
  <div class="tsearch"><svg viewBox="0 0 26 26"><circle cx="16" cy="9.500" r="8" fill="none" stroke="#222" stroke-width="1.700"/><path d="M10 15.500L1 25" stroke="#222" stroke-width="1.700"/></svg><span>Type here to search</span></div>
  <div class="apps">
    <span><svg viewBox="0 0 32 32"><path d="M4 4.500v3h14v-3M4 27.500v-3h14v3M4.500 10.500h13v11h-13zM25 4v7M25 17v11" fill="none" stroke="#fff" stroke-width="1.500"/><path d="M24 12h3v3h-3z" fill="#fff"/></svg></span>
    <span class="run"><svg viewBox="0 0 36 36"><path d="M2 6h14l2 3H2z" fill="#e09a00"/><path d="M2 8h32v23H2z" fill="#ffd45a"/><path d="M7 33V22a2 2 0 0 1 2-2h18a2 2 0 0 1 2 2v11h-6v-7H13v7z" fill="#3a95dd"/></svg></span>
    <span class="run"><svg viewBox="0 0 36 36"><circle cx="18" cy="18" r="18" fill="#fbc116"/><path d="M18 18L2.400 9A18 18 0 0 0 18 36l8-13.500z" fill="#219a48"/><path d="M18 9h15.600A18 18 0 0 0 2.400 9l8 13z" fill="#e33b2e"/><circle cx="18" cy="18" r="9" fill="#fff"/><circle cx="18" cy="18" r="7" fill="#2f7bea"/></svg></span>
    <span><svg viewBox="0 0 36 36"><path d="M0 12L18 1l18 11v5H0z" fill="#0b5fb0"/><path d="M0 12l18 11 18-11v22H0z" fill="#25a2ec"/><path d="M4 11.500h28L18 22z" fill="#f2f2f2"/><path d="M36 12v22L17 22z" fill="#41c6f4"/></svg></span>
    <span><svg viewBox="0 0 36 36"><path d="M2 2h32v8H2z" fill="#0b5fb0"/><path d="M2 9h32v25H2z" fill="#249fe4"/><path d="M7 0v6M29 0v6" stroke="#59d0f8" stroke-width="2.500"/><path d="M12.500 15h17M6 21h24M6 27h17" stroke="#fff" stroke-width="4" stroke-dasharray="4 2.500"/></svg></span>
    <span><svg viewBox="0 0 36 36"><circle cx="19" cy="7" r="5.500" fill="#7b83eb"/><circle cx="30" cy="9" r="4" fill="#5059c9"/><path d="M24 14h12v10a6 6 0 0 1-12 4z" fill="#5059c9"/><path d="M10 14h18v12a9 9 0 0 1-18 0z" fill="#7b83eb"/><path d="M1 9h17v18H1z" fill="#4b53bc"/><path d="M5 13.500h9M9.500 13.500V23" stroke="#fff" stroke-width="2.500"/></svg></span>
    <span><svg viewBox="0 0 36 36"><rect width="36" height="36" rx="13" fill="#0b5cff"/><text class="zm" x="5" y="21" textLength="26">zoom</text></svg></span>
    <span class="run"><svg viewBox="0 0 36 36"><circle cx="18" cy="18" r="17" fill="#8534a8"/><circle cx="18" cy="18" r="12.500" fill="#fff"/><path d="M15 32v-4c-4 1-5-2-7-3 3-1 3 2 7 1l1-2c-5-1-7-3-7-7 0-2 .5-3 1.500-4.500-.5-1.500-.5-2.500 0-4 2 0 3 .8 4.500 1.800a15 15 0 0 1 6 0C22.500 9.300 23.500 8.500 25.500 8.500c.5 1.500.5 2.500 0 4C26.500 14 27 15 27 17c0 4-2 6-7 7l1 2v6z" fill="#8534a8"/></svg></span>
    <span class="run"><svg viewBox="0 0 36 36"><path d="M9 2h26v8H9z" fill="#41a5ee"/><path d="M9 10h26v8H9z" fill="#2b7cd3"/><path d="M9 18h26v8H9z" fill="#185abd"/><path d="M9 26h26v8H9z" fill="#103f91"/><rect x="1" y="9" width="18" height="18" rx="2" fill="#185abd"/><path d="M5 13l2.500 10L10 14l2.500 9L15 13" fill="none" stroke="#fff" stroke-width="2"/></svg></span>
    <span class="run active"><svg viewBox="0 0 36 36"><path d="M1 7L18 0l17 6-16 6z" fill="#e83030"/><path d="M1 7l18 5v21L1 28z" fill="#a80c10"/><path d="M19 12l16-6v20l-16 8z" fill="#6c0a0c"/><text class="swt" x="4" y="24" textLength="29" lengthAdjust="spacingAndGlyphs">SW</text><text class="swy" x="14" y="36" textLength="22" lengthAdjust="spacingAndGlyphs">2022</text></svg></span>
    <span class="run"><svg viewBox="0 0 36 36"><circle cx="18" cy="18" r="17" fill="#fff" stroke="#d63030" stroke-width="1.500"/><circle cx="21" cy="9" r="2.300" fill="#e02020"/><path d="M3 11c5 3 10 4 14 4 4-1 7-4 9-9M18 14c-1 8-1 12-3 20M19 15c1 4 3 5 5 5l-5 3" fill="none" stroke="#e02020" stroke-width="2.400"/></svg></span>
  </div>
  <div class="tray">
    <svg class="wx" viewBox="0 0 36 24"><path d="M8 23a7.500 7.500 0 0 1 0-14C10-1 25-2 27 8c12 0 12 15 1 15z" fill="url(#gCloud)"/></svg>
    <span class="temp">67°F&nbsp; Cloudy</span>
    <svg class="chev" viewBox="0 0 18 10"><path d="M1 9l8-8 8 8" fill="none" stroke="#fff" stroke-width="1.500"/></svg>
    <svg class="od" viewBox="0 0 24 16"><path d="M5 16a5 5 0 0 1 0-10C7-1 17-1 19 5c7 0 6 11 0 11z" fill="#1490df"/><path d="M6 5c3-6 12-6 13 1l-7 4z" fill="#0364b8"/></svg>
    <svg class="bat" viewBox="0 0 24 20"><path d="M6 5h15v12H6z" fill="#fff" stroke="#fff"/><path d="M23 8.500v5" stroke="#fff" stroke-width="1.500"/><path d="M1 3h6v5c0 2-6 2-6 0zM2 0v3M6 0v3M4 9v9" fill="#1c2a3c" stroke="#fff" stroke-width="1.300"/></svg>
    <svg class="net" viewBox="0 0 24 20"><path d="M6 1.500h17v13H6M14 14v4M9 18.500h11M1 1h5v7H1zM3.500 8v12" fill="none" stroke="#fff" stroke-width="1.300"/></svg>
    <svg class="snd" viewBox="0 0 24 20"><path d="M1 7h4l5-5v16l-5-5H1z" fill="none" stroke="#fff" stroke-width="1.300"/><path d="M13 7c1 2 1 4 0 6M16 5c2 3 2 7 0 10" fill="none" stroke="#fff" stroke-width="1.300"/><path d="M19.500 3c3 4 3 10 0 14" fill="none" stroke="#8090a0" stroke-width="1.300"/></svg>
    <span class="clock">9:59 PM<br>11/5/2022</span>
    <svg class="note" viewBox="0 0 26 26"><path d="M1 1.500h24v19h-8l-4 4-4-4H1z" fill="none" stroke="#fff" stroke-width="1.500"/></svg>
    <i class="peek"></i>
  </div>
</div>
<script src="model.js"></script>
</body>
</html>
```
FILE: styles.css
```css
* { box-sizing: border-box; }
html, body { margin: 0; padding: 0; }
body {
  width: 2560px; height: 1440px; overflow: hidden;
  display: flex; flex-direction: column;
  background: #f7f7f7; color: #111;
  font: 17px/23px "Open Sans", "Noto Sans", sans-serif;
  letter-spacing: -0.35px;
}
svg { display: block; flex: none; overflow: visible; }
svg.defs { position: absolute; }
i { font-style: normal; flex: none; }
.dd { width: 8px; height: 5px; background: #333; clip-path: polygon(0 0, 100% 0, 50% 100%); display: block; }
.dd.light { background: #888; }

/* title bar */
.titlebar { height: 54px; border-top: 1px solid #bbb; border-bottom: 1px solid #b8b8b8; display: flex; align-items: center; flex: none; }
.brand { width: 218px; padding-left: 8px; display: flex; align-items: center; gap: 7px; color: #d9261c; }
.ds { width: 30px; height: 32px; margin-top: -8px; }
.brand-name { font: italic 21px/24px "Lato", sans-serif; letter-spacing: -0.6px; }
.brand-name b { font-weight: 900; }
.menus { display: flex; align-items: center; width: 361px; height: 52px; border-right: 1px solid #bbb; padding-top: 3px; letter-spacing: -0.45px; }
.m1 { width: 40px; } .m2 { width: 45px; } .m3 { width: 52px; } .m4 { width: 59px; } .m5 { width: 53px; } .m6 { width: 80px; }
.pin { width: 21px; height: 21px; }
.quick { display: flex; align-items: center; width: 1003px; padding-left: 39px; }
.c28 { width: 28px; height: 28px; } .c32 { width: 32px; height: 28px; } .c24 { width: 24px; height: 24px; }
.quick > .dd { margin-left: 12px; }
.q-new { margin-left: 17px; }
.q-g { margin-left: 11px; } .q-g2 { margin-left: 14px; }
.q-g3 { margin-left: 16px; }
.quick > .q-d { margin-left: 14px; }
.sel { width: 43px; height: 47px; background: #b1b1b1; border: 1px solid #777; margin-left: 7px; padding: 6px 9px; }
.sel svg { width: 24px; height: 32px; }
.sel-dd { width: 19px; height: 47px; border: 1px solid #888; border-left: 0; padding: 20px 5px; }
.q-tr { width: 16px; height: 30px; margin-left: 16px; }
.q-li { width: 26px; height: 30px; margin-left: 26px; }
.q-ge { width: 28px; height: 28px; margin-left: 18px; }
.quick > .q-d2 { margin-left: 12px; }
.doc-title { width: 386px; padding-top: 3px; }
.search { width: 302px; height: 35px; border: 1px solid #b5b5b5; background: #fff; display: flex; align-items: center; padding-left: 7px; color: #666; }
.prompt { width: 21px; height: 21px; background: #1c1c1c; border-radius: 1px; }
.prompt svg { width: 21px; height: 21px; }
.ph { width: 227px; padding-left: 11px; padding-top: 1px; }
.mag { width: 21px; height: 21px; }
.search .dd { margin-left: 11px; background: #666; }
.win-btns { display: flex; gap: 32px; padding-left: 21px; color: #333; }
.win-btns svg { width: 24px; height: 24px; }

/* ribbon */
.ribbon { height: 118px; border-bottom: 1px solid #808080; border-right: 1px solid #888; display: flex; flex: none; letter-spacing: -0.42px; }
.ribbon hr { width: 1px; margin: 1px 1px 3px; border: 0; background: #c2c2c2; }
.cmd { padding-top: 8px; text-align: center; display: flex; flex-direction: column; align-items: center; white-space: nowrap; }
.cmd > svg { width: 28px; height: 28px; margin-bottom: 2px; }
.cmd .dd { margin-top: 18px; }
.off { color: #b4b4b4; }
.w66 { width: 66px; } .w102 { width: 101px; } .w95 { width: 95px; } .w89 { width: 89px; } .w74 { width: 74px; } .w70 { width: 70px; }
.w86 { width: 86px; } .w87 { width: 87px; } .w61 { width: 61px; } .w106 { width: 106px; } .w85 { width: 85px; } .w78 { width: 78px; }
.w98 { width: 99px; } .w105 { width: 105px; } .w126 { width: 127px; } .w140 { width: 140px; letter-spacing: -0.5px; } .w80 { width: 80px; } .w145 { width: 145px; letter-spacing: -0.6px; }
.w68 { width: 68px; } .w158 { width: 158px; } .w124 { width: 124px; }
.collapse { width: 20px; height: 12px; margin: 92px 8px 0 auto; }
.qm { font: bold 17px "Liberation Sans", sans-serif; fill: #2b83ad; }
.dw { font: bold 6.500px "Liberation Sans", sans-serif; fill: #fff; letter-spacing: 0; }
.bigA { font: bold 22px "Liberation Serif", serif; fill: #4da3cc; stroke: #174a66; stroke-width: .8; }
.anA { font: bold 23px "Liberation Serif", serif; fill: #3c87ad; stroke: #174a66; stroke-width: .8; }

/* work area */
.work {
  height: 1156px; flex: none; display: flex; flex-direction: column;
  background:
    radial-gradient(ellipse 1750px 640px at 250px -20px, #fff 0, #fff 52%, rgba(255,255,255,0) 100%),
    radial-gradient(ellipse 620px 520px at 2120px 420px, rgba(206,212,226,.28), rgba(255,255,255,0)),
    linear-gradient(180deg, #eff1f6 0, #e6e9f1 22%, #dfe2eb 48%, #dfe2ec 52%, #f0f2f6 63%, #fdfdfd 73%, #fefefe 85%, #f5f6f9 100%);
}
.work-top { height: 33px; display: flex; flex: none; }
.tabs { display: flex; height: 33px; background: #d3d3d3; }
.tabs span { border-right: 1px solid #808080; border-bottom: 2px solid #8a8a8a; color: #333; text-align: center; line-height: 33px; letter-spacing: 0; white-space: nowrap; padding-left: 1px; }
.tabs .on { background: #f7f7f7; border-bottom-color: #f7f7f7; font-weight: 700; letter-spacing: -0.6px; margin-top: -1px; line-height: 35px; padding-left: 0; }
.t94 { width: 94px; } .t72 { width: 72px; } .t71 { width: 71px; } .t101 { width: 102px; } .t81 { width: 81px; } .t90 { width: 90px; } .tabs .t202 { width: 202px; letter-spacing: .4px; padding-left: 0; } .t57 { width: 57px; }
.hud { display: flex; align-items: center; margin-left: 431px; padding-top: 8px; width: 500px; }
.hud svg { width: 28px; height: 28px; margin-right: 10px; }
.hud .dd { background: #888; margin: 0 9.500px 0 -3px; }
.doc-btns { margin-left: auto; display: flex; gap: 14px; padding: 9px 14px 0 0; color: #a0a0a0; }
.doc-btns svg { width: 24px; height: 24px; }
.work-body { flex: 1; display: flex; min-height: 0; }

/* feature manager */
.panel { width: 327px; background: #f7f7f7; border-right: 2px solid #8c8c8c; border-left: 1px solid #bbb; display: flex; flex-direction: column; flex: none; }
.grip { height: 26px; margin-top: 4px; border-top: 1px solid #b8b8b8; border-bottom: 1px solid #c4c4c4; display: flex; justify-content: center; align-items: center; flex: none; }
.knob { width: 10px; height: 10px; border-radius: 50%; border: 1px solid #888; background: radial-gradient(#eee, #bbb); }
.ptabs { height: 39px; margin-top: 4px; display: flex; align-items: center; padding-left: 1px; border-bottom: 1px solid #999; flex: none; }
.ptabs span { width: 52px; height: 38px; background: #d3d3d3; border: 1px solid #888; border-left: 0; border-bottom: 0; display: flex; align-items: center; justify-content: center; }
.ptabs .on { background: #f7f7f7; height: 39px; margin-bottom: -1px; }
.ptabs span svg { width: 28px; height: 27px; }
.ptabs .more { width: 12px; height: 20px; margin-left: 40px; margin-top: -4px; }
.filter { height: 38px; margin: 0 4px; border: 1px solid #b5b5b5; display: flex; align-items: center; padding-left: 5px; gap: 3px; flex: none; }
.filter svg { width: 28px; height: 28px; }
.tree-wrap { height: 981px; display: flex; flex: none; }
.tree { list-style: none; margin: 0; padding: 0; width: 299px; overflow: hidden; }
.tree li { height: 32.030px; line-height: 33px; display: flex; align-items: center; white-space: nowrap; font-size: 18px; letter-spacing: -0.52px; }
.tree svg { width: 28px; height: 28px; margin-right: 5px; }
.tree i { width: 6px; height: 12px; margin: 0 19px 0 14px; }
.tree .lead { margin-right: 7px; }
.tree .ex { background: #555; clip-path: polygon(0 0, 100% 50%, 0 100%); }
.tree .cap { width: 29px; margin-right: 5px; }
.root { padding-left: 5px; }
.vscroll { width: 24px; background: #f0f0f0; display: flex; flex-direction: column; align-items: center; margin-right: 1px; }
.vscroll svg { width: 14px; height: 10px; margin-top: 10px; }
.vscroll b { width: 24px; height: 569px; background: #cdcdcd; margin-top: 6px; }
.vscroll svg:last-child { margin-top: auto; margin-bottom: 8px; }
.hscroll { height: 25px; background: #f0f0f0; display: flex; align-items: center; flex: none; margin-right: 1px; }
.hscroll svg { width: 10px; height: 14px; margin-left: 7px; }
.hscroll b { width: 140px; height: 25px; background: #cdcdcd; margin: 0 106px 0 9px; }

/* graphics area */
.canvas { position: relative; flex: 1; }
.scene { width: 2233px; height: 1123px; }
.ax-y { stroke: #2c9a2c; stroke-width: 1.200; } .ax-x { stroke: #f04040; stroke-width: 1.200; }
.view-name { position: absolute; left: 11px; top: 1098px; font: 900 19.500px/23px "Lato", sans-serif; letter-spacing: 0; }
.handle { position: absolute; left: -2px; top: 515px; width: 15px; height: 59px; background: #f7f7f7; border: 1px solid #888; border-left: 0; display: flex; align-items: center; justify-content: center; }
.pane { position: absolute; right: 0; top: 42px; width: 40px; border: 1px solid #888; border-right: 0; background: #d6d6d6; }
.pane span { height: 36px; border-bottom: 1px solid #888; display: flex; align-items: center; justify-content: center; }
.pane span:last-child { border-bottom: 0; }
.pane .on { background: #f7f7f7; }
.pane svg { width: 28px; height: 28px; } .pane .wide { width: 32px; }

/* document tabs and status */
.btabs { height: 26px; display: flex; border-top: 1px solid #808080; border-bottom: 1px solid #808080; flex: none; }
.nav { display: flex; width: 99px; padding-left: 2px; background: #8f92a4; }
.nav span { width: 24px; background: #a9abc0; border: 1px solid #83859c; display: flex; align-items: center; justify-content: center; }
.nav svg { width: 16px; height: 16px; fill: #77778f; }
.bt { text-align: center; border-right: 1px solid #808080; background: #d3d3d3; font-size: 18px; line-height: 23px; letter-spacing: -0.1px; }
.model { width: 88px; background: #f7f7f7; font-weight: 700; letter-spacing: 0; padding-left: 6px; }
.v3d { width: 103px; } .motion { width: 171px; padding-right: 8px; letter-spacing: .1px; }
.status { height: 26px; display: flex; align-items: center; font-size: 18px; line-height: 26px; letter-spacing: -0.4px; white-space: nowrap; flex: none; overflow: hidden; padding-top: 4px; }
.ed { width: 2030px; padding-left: 1px; } .fd { width: 121px; } .ea { width: 270px; } .mks { width: 72px; }
.up { width: 6px; height: 5px; background: #333; clip-path: polygon(50% 0, 100% 100%, 0 100%); margin-top: -5px; }
.status svg { width: 28px; height: 26px; margin-left: 28px; }

/* taskbar */
.taskbar { height: 60px; display: flex; background: linear-gradient(90deg, #223840 0, #21353f 45%, #1b2b3c 75%, #1a2641 100%); color: #fff; letter-spacing: 0; flex: none; }
.start { width: 72px; display: flex; align-items: center; justify-content: center; }
.start svg { width: 24px; height: 24px; }
.tsearch { width: 516px; background: #f2f2f2; border: 2px solid #bebebe; display: flex; align-items: center; padding-left: 16px; color: #333; font-size: 22px; letter-spacing: 0; }
.tsearch svg { width: 25px; height: 25px; margin-right: 17px; }
.tsearch span { padding-top: 2px; }
.apps { display: flex; gap: 2px; padding-left: 1px; }
.apps span { width: 73px; display: flex; align-items: center; justify-content: center; position: relative; }
.apps svg { width: 36px; height: 36px; }
.apps span:first-child svg { width: 32px; height: 32px; }
.run::after { content: ""; position: absolute; left: 6px; right: 6px; bottom: 0; height: 3px; background: #76b9ed; }
.active { background: #4c5c66; }
.active::after { left: 0; right: 0; }
.zm { font: bold 11px "Liberation Sans", sans-serif; fill: #fff; }
.swt { font: bold 20px "Liberation Sans", sans-serif; fill: #fff; }
.swy { font: bold 12px "Liberation Sans", sans-serif; fill: #fff; stroke: #222; stroke-width: .4; }
.tray { margin-left: auto; display: flex; align-items: center; }
.wx { width: 36px; height: 26px; }
.temp { font-size: 21px; padding-left: 13px; width: 168px; white-space: nowrap; padding-top: 1px; letter-spacing: -0.4px; }
.chev { width: 18px; height: 10px; margin-left: 2px; }
.od { width: 24px; height: 17px; margin-left: 15px; }
.bat, .net, .snd { width: 24px; height: 20px; margin-left: 12px; }
.clock { width: 100px; text-align: center; line-height: 28px; font-size: 18px; letter-spacing: -0.4px; margin-left: 8px; }
.note { width: 25px; height: 25px; margin: 0 30px 0 19px; }
.peek { width: 2px; height: 60px; background: #6a7488; margin-right: 6px; }
```
FILE: model.js
```js
// Faceted base ring: outer and inner circles are tessellated separately.
const facet = (r, n, startDeg) => {
  const pts = [];
  for (let k = 0; k < n; k++) {
    const a = (startDeg + (k * 360) / n) * Math.PI / 180;
    pts.push((1433.2 + r * Math.sin(a)).toFixed(2) + " " + (760 - r * Math.cos(a)).toFixed(2));
  }
  return "M" + pts.join("L") + "Z";
};
document.getElementById("ring").setAttribute("d", facet(477, 53, -1.53) + facet(403.5, 49, -1.65));

// Link with round ends of radius c and arcs tangent to both, w wide (half) at the waist.
const link = (len, c, w) => {
  const h = len / 2;
  const R = (h * h / (c - w) - (c + w)) / 2;
  const a = Math.asin(h / (R + c));
  const x = c * Math.sin(a), y = c * Math.cos(a);
  return `M${x} ${-y}A${R} ${R} 0 0 0 ${len - x} ${-y}A${c} ${c} 0 1 1 ${len - x} ${y}A${R} ${R} 0 0 0 ${x} ${y}A${c} ${c} 0 1 1 ${x} ${-y}Z`;
};
document.querySelectorAll(".prox").forEach(p => p.setAttribute("d", link(440.6, 36.8, 20)));
document.querySelectorAll(".dist").forEach(p => p.setAttribute("d", link(367.2, 36.8, 21.3)));
```
